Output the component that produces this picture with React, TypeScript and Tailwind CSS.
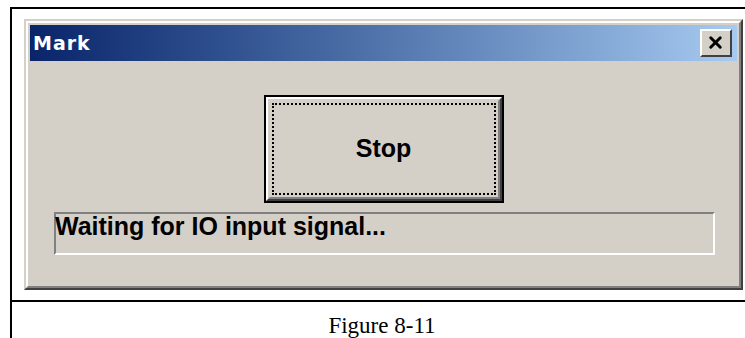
import { X } from "lucide-react";

function Dialog() {
  return (
    <div className="w-[719px] border-2 border-t-[#d4d0c8] border-l-[#d4d0c8] border-r-[#404040] border-b-[#404040]">
      <div className="border-2 border-t-white border-l-white border-r-[#808080] border-b-[#808080] bg-[#d4d0c8] p-[2px]">
        {/* title bar */}
        <div className="h-[36px] flex items-center justify-between pl-[3px] pr-[5px] bg-gradient-to-r from-[#0a246a] to-[#a6caf0]">
          <span className="text-white font-bold text-[19px] tracking-[1px] font-['DejaVu_Sans',sans-serif]">Mark</span>
          <div className="w-[32px] h-[28px] flex items-center justify-center border-2 border-t-white border-l-white border-r-[#404040] border-b-[#404040] bg-[#d4d0c8]">
            <X className="w-[19px] h-[19px] -ml-[2px] -mt-[2px] text-black" strokeWidth={3.75} />
          </div>
        </div>

        {/* body */}
        <div className="pt-[34px] pb-[29px] flex flex-col">
          <div className="self-center w-[240px] h-[108px] border-2 border-black">
            <div className="relative h-full border-2 border-t-white border-l-white border-r-[#404040] border-b-[#404040]">
              <div className="h-full border-2 border-t-[#d4d0c8] border-l-[#d4d0c8] border-r-[#808080] border-b-[#808080] flex items-center justify-center">
                <span className="font-bold text-[25px] text-black font-['Liberation_Sans',Arial,sans-serif]">Stop</span>
              </div>
              <div className="absolute inset-[4px] border-2 border-dotted border-black pointer-events-none" />
            </div>
          </div>

          <div className="mt-[9px] ml-[24px] w-[661px] h-[43px] border-2 border-t-[#808080] border-l-[#808080] border-r-white border-b-white">
            <span className="block -ml-[1px] leading-[25px] font-bold text-[25px] text-black font-['Liberation_Sans',Arial,sans-serif]">
              Waiting for IO input signal...
            </span>
          </div>
        </div>
      </div>
    </div>
  );
}

export default function App() {
  return (
    <div className="w-[745px] h-[338px] overflow-hidden bg-white">
      <div className="mt-[7px] ml-[10px] w-[742px] border-l-2 border-t-2 border-black">
        <div className="pt-[10px] pl-[12px] pb-[10px]">
          <Dialog />
        </div>
        <div className="border-t-2 border-black pt-[11px] text-center leading-[26px] text-[23px] text-black font-['Liberation_Serif','Times_New_Roman',serif]">
          Figure 8-11
        </div>
      </div>
    </div>
  );
}
